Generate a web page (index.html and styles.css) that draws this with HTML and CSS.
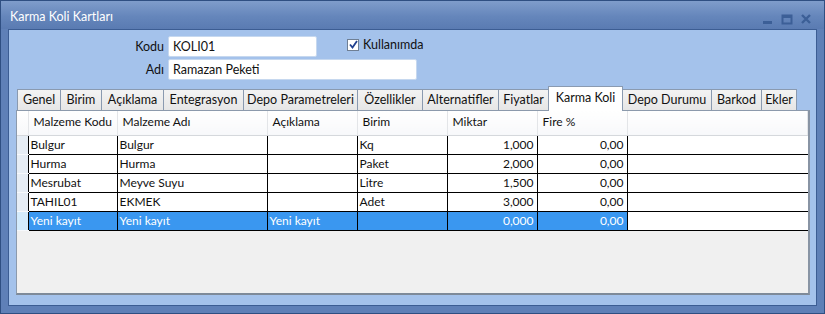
FILE: index.html
```html
<!DOCTYPE html>
<html lang="tr">
<head>
  <meta charset="UTF-8" />
  <title>Karma Koli Kartları</title>
  <link rel="stylesheet" href="styles.css">
</head>
<body>

  <div class="window">
    <div class="titlebar">
      <span class="title">Karma Koli Kartları</span>
      <div class="controls">
        <svg width="12" height="12" viewBox="0 0 12 12"><rect x="1" y="8" width="9" height="3" fill="#3c5f97"/></svg>
        <svg width="12" height="12" viewBox="0 0 12 12"><rect x="1.5" y="2.5" width="9" height="8" fill="none" stroke="#3c5f97" stroke-width="2"/><rect x="1" y="2" width="10" height="3" fill="#3c5f97"/></svg>
        <svg width="12" height="12" viewBox="0 0 12 12"><path d="M2 2 L10 10 M10 2 L2 10" stroke="#3c5f97" stroke-width="2.4"/></svg>
      </div>
    </div>

    <div class="client">
      <div class="form-row">
        <label class="lbl">Kodu</label>
        <input class="field short" type="text" value="KOLI01" />
        <label class="check">
          <span class="box">
            <svg width="9" height="9" viewBox="0 0 9 9"><path d="M1 4.5 L3.5 7.5 L8 1" fill="none" stroke="#1f3f8f" stroke-width="1.8"/></svg>
          </span>
          Kullanımda
        </label>
      </div>
      <div class="form-row">
        <label class="lbl">Adı</label>
        <input class="field long" type="text" value="Ramazan Peketi" />
      </div>

      <div class="tabs">
        <div class="tab">Genel</div>
        <div class="tab">Birim</div>
        <div class="tab">Açıklama</div>
        <div class="tab">Entegrasyon</div>
        <div class="tab">Depo Parametreleri</div>
        <div class="tab">Özellikler</div>
        <div class="tab">Alternatifler</div>
        <div class="tab">Fiyatlar</div>
        <div class="tab active">Karma Koli</div>
        <div class="tab">Depo Durumu</div>
        <div class="tab">Barkod</div>
        <div class="tab">Ekler</div>
      </div>

      <div class="panel">
        <table class="grid">
          <colgroup>
            <col class="c-ind"><col class="c-kod"><col class="c-ad"><col class="c-std"><col class="c-std"><col class="c-std"><col class="c-std"><col>
          </colgroup>
          <thead>
            <tr>
              <th></th>
              <th>Malzeme Kodu</th>
              <th>Malzeme Adı</th>
              <th>Açıklama</th>
              <th>Birim</th>
              <th>Miktar</th>
              <th>Fire %</th>
              <th></th>
            </tr>
          </thead>
          <tbody>
            <tr>
              <td class="ind"></td><td>Bulgur</td><td>Bulgur</td><td></td><td>Kq</td><td class="num">1,000</td><td class="num">0,00</td><td></td>
            </tr>
            <tr>
              <td class="ind"></td><td>Hurma</td><td>Hurma</td><td></td><td>Paket</td><td class="num">2,000</td><td class="num">0,00</td><td></td>
            </tr>
            <tr>
              <td class="ind"></td><td>Mesrubat</td><td>Meyve Suyu</td><td></td><td>Litre</td><td class="num">1,500</td><td class="num">0,00</td><td></td>
            </tr>
            <tr>
              <td class="ind"></td><td>TAHIL01</td><td>EKMEK</td><td></td><td>Adet</td><td class="num">3,000</td><td class="num">0,00</td><td></td>
            </tr>
            <tr class="selected">
              <td class="ind"></td><td>Yeni kayıt</td><td>Yeni kayıt</td><td>Yeni kayıt</td><td></td><td class="num">0,000</td><td class="num">0,00</td><td class="blank"></td>
            </tr>
          </tbody>
        </table>
      </div>
    </div>
  </div>

</body>
</html>
```

FILE: styles.css
```css
* {
  box-sizing: border-box;
}
body {
  margin: 0;
  font-family: 'Lato', 'Segoe UI', sans-serif;
  font-size: 12px;
  color: #111;
  background: #5a7bb2;
}
.window {
  width: 825px;
  height: 314px;
  background: #5f80b7;
  border: 1px solid #2f4f82;
  display: flex;
  flex-direction: column;
}
.titlebar {
  height: 28px;
  flex: none;
  display: flex;
  align-items: center;
  justify-content: space-between;
  padding: 2px 12px 0 9px;
  background: linear-gradient(to bottom, #7f9dcb, #6586bb 55%, #5a7bb2);
}
.title {
  color: #fff;
  font-size: 12.5px;
}
.controls {
  display: flex;
  gap: 7px;
  padding-top: 6px;
}
.client {
  flex: 1;
  margin: 0 7px 7px 7px;
  background: #a4c2eb;
  border: 1px solid #3c5d93;
  padding: 6px 6px 0 7px;
  display: flex;
  flex-direction: column;
}
.form-row {
  display: flex;
  align-items: center;
  margin-bottom: 2px;
}
.lbl {
  width: 152px;
  text-align: right;
  padding-right: 4px;
  font-size: 12.5px;
}
.field {
  height: 21px;
  border: 1px solid #c6d8ef;
  border-radius: 2px;
  background: #fff;
  font-family: inherit;
  font-size: 12.5px;
  color: #111;
  padding: 0 4px;
  outline: none;
}
.short {
  width: 149px;
}
.long {
  width: 249px;
}
.check {
  display: flex;
  align-items: center;
  gap: 4px;
  margin-left: 30px;
  margin-top: -4px;
  font-size: 12.5px;
}
.box {
  width: 12px;
  height: 12px;
  border: 1px solid #6f7f94;
  background: #fff;
  display: flex;
  align-items: center;
  justify-content: center;
}
.tabs {
  display: flex;
  align-items: flex-end;
  margin: 4px 0 0 1px;
  height: 24px;
}
.tab {
  flex: none;
  height: 21px;
  line-height: 20px;
  text-align: center;
  white-space: nowrap;
  font-size: 12.5px;
  background: linear-gradient(to bottom, #f3f3f3, #e6e6e6);
  border: 1px solid #8a9ab0;
  border-bottom: none;
  margin-right: -1px;
}
.tab:nth-child(1) { width: 44px; }
.tab:nth-child(2) { width: 42px; }
.tab:nth-child(3) { width: 63px; }
.tab:nth-child(4) { width: 81px; }
.tab:nth-child(5) { width: 115px; }
.tab:nth-child(6) { width: 66px; }
.tab:nth-child(7) { width: 77px; }
.tab:nth-child(8) { width: 51px; }
.tab:nth-child(9) { width: 75px; }
.tab:nth-child(10) { width: 90px; }
.tab:nth-child(11) { width: 51px; }
.tab:nth-child(12) { width: 36px; }
.tab.active {
  height: 25px;
  line-height: 22px;
  background: #fff;
  position: relative;
  z-index: 1;
  margin-bottom: -1px;
}
.panel {
  height: 185px;
  background: #f0f0f0;
  border: 1px solid #8c9aac;
  border-bottom: 2px solid #7e8a99;
  border-right: 2px solid #8894a4;
}
.grid {
  width: 100%;
  border-collapse: collapse;
  table-layout: fixed;
}
.c-ind {
  width: 11px;
}
.c-kod {
  width: 89px;
}
.c-ad {
  width: 150px;
}
.c-std {
  width: 90px;
}
.grid th {
  height: 24px;
  text-align: left;
  font-weight: normal;
  padding: 0 5px 3px;
  background: linear-gradient(to bottom, #ffffff, #f7f8fa);
  border-right: 1px solid #e3e5e8;
  border-bottom: 1px solid #d5d8dc;
  white-space: nowrap;
}
.grid td {
  height: 19px;
  padding: 0 3px 0 2px;
  background: #fff;
  border: 1px solid #000;
  white-space: nowrap;
  overflow: hidden;
}
.grid td:last-child {
  border-right: none;
}
.grid td.ind {
  background: #e6edf5;
  border: none;
  border-bottom: 1px solid #f7f9fc;
}
.grid td.num {
  text-align: right;
}
.grid tr.selected td {
  background: #3a97f0;
  color: #fff;
}
.grid tr.selected td.ind {
  background: #d4ebfc;
}
.grid tr.selected td.blank {
  background: #fff;
}
```
